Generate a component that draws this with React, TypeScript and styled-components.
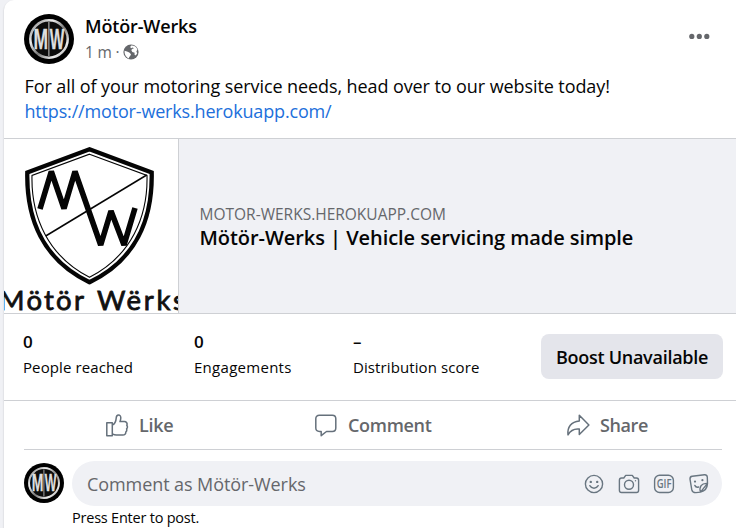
import React from "react";
import styled, { createGlobalStyle } from "styled-components";

const GlobalStyle = createGlobalStyle`
  * { box-sizing: border-box; }
  html, body { margin: 0; padding: 0; background: #f0f1f5; overflow: hidden; }
  body { font-family: "Open Sans", "Noto Sans", sans-serif; color: #050505; }
`;

const Page = styled.div`
  height: 528px;
  padding-left: 4px;
  overflow: hidden;
`;

const Card = styled.article`
  height: 540px;
  background: #fff;
  border-top-left-radius: 10px;
  box-shadow: 0 1px 2px rgba(0, 0, 0, 0.2);
`;

const Header = styled.header`
  display: flex;
  height: 74px;
  padding: 14px 26px 0 20px;
`;

const Byline = styled.div`
  flex: 1;
  margin-top: -1px;
  padding-left: 11px;
`;

const Label = styled.div<{ $size: number; $line: number; $track?: number; $weight?: number; $color?: string }>`
  font-size: ${(p) => p.$size}px;
  line-height: ${(p) => p.$line}px;
  letter-spacing: ${(p) => p.$track ?? 0}px;
  font-weight: ${(p) => p.$weight ?? 400};
  color: ${(p) => p.$color ?? "#050505"};
  white-space: nowrap;
`;

const Meta = styled.div`
  display: flex;
  align-items: center;
  gap: 4px;
  height: 26px;
`;

const MoreButton = styled.button`
  display: flex;
  align-self: flex-start;
  margin: 18px 0 0;
  padding: 0;
  border: 0;
  background: none;
`;

const Message = styled.div`
  height: 64px;
  padding-left: 20.5px;
`;

const Preview = styled.section`
  display: flex;
  height: 176px;
  border-top: 1px solid #ced0d4;
  border-bottom: 1px solid #ced0d4;
  background: #f0f1f5;
`;

const Thumb = styled.div`
  width: 175px;
  border-right: 1px solid #ced0d4;
  background: #fff;
`;

const PreviewText = styled.div`
  padding: 64px 0 0 20.5px;
`;

const Stats = styled.section`
  display: grid;
  grid-template-columns: 171px 159px 1fr 182px;
  height: 86px;
  padding: 15px 13px 0 19px;
`;

const BoostButton = styled.button`
  height: 45px;
  margin-top: 5px;
  padding: 0;
  border: 0;
  border-radius: 8px;
  background: #e4e5eb;
  font-family: inherit;
`;

const Actions = styled.div`
  display: grid;
  grid-template-columns: 209px 252px 1fr;
  height: 49px;
  margin: 0 14px 0 20px;
  padding-left: 81px;
  border-bottom: 1px solid #ced0d4;
`;

const ActionBar = styled.div`
  border-top: 1px solid #ced0d4;
`;

const Action = styled.div`
  display: flex;
  align-items: center;
  gap: 10px;
  padding-bottom: 1px;
`;

const Composer = styled.div`
  display: flex;
  padding: 11px 14px 0 20px;
`;

const ComposerAvatar = styled.div`
  padding-top: 2px;
  width: 48px;
`;

const Field = styled.div`
  display: flex;
  align-items: center;
  justify-content: space-between;
  width: 650px;
  height: 45px;
  padding: 0 12px 0 15px;
  border-radius: 23px;
  background: #f0f1f5;
`;

const Tools = styled.div`
  display: flex;
  gap: 13px;
`;

const Hint = styled.div`
  padding-left: 68px;
`;

const Drawing = styled.svg`
  display: block;
  flex: none;
  overflow: hidden;
`;

function Avatar({ size }: { size: number }) {
  return (
    <Drawing width={size} height={size} viewBox="0 0 50 50">
      <defs>
        <linearGradient id="chrome" x1="0" y1="0" x2="1" y2="1">
          <stop offset="0" stopColor="#777" />
          <stop offset="0.3" stopColor="#eee" />
          <stop offset="0.55" stopColor="#777" />
          <stop offset="0.8" stopColor="#eee" />
          <stop offset="1" stopColor="#888" />
        </linearGradient>
      </defs>
      <circle cx="25" cy="25" r="25" fill="#000" />
      <circle cx="25" cy="25" r="18.7" fill="#0c0c0c" stroke="url(#chrome)" strokeWidth="2.5" />
      <path d="M24.9 8v34" stroke="#ccc" strokeWidth="1" />
      <g fill="#dedede" stroke="#dedede" strokeWidth="0.4" fontFamily="Liberation Sans" fontWeight="700" fontSize="30">
        <text x="9.6" y="35.4" textLength="14.6" lengthAdjust="spacingAndGlyphs">M</text>
        <text x="25.8" y="35.4" textLength="14.6" lengthAdjust="spacingAndGlyphs">W</text>
      </g>
    </Drawing>
  );
}

function ShieldLogo() {
  return (
    <Drawing width="174" height="174" viewBox="0 0 174 174">
      <defs>
        <clipPath id="monogram"><rect x="30" y="31" width="110" height="76.5" /></clipPath>
      </defs>
      <g fill="none" stroke="#050505">
        <path d="M85.5 10.3L147.7 33.6C148.6 80 132 121 85.5 143.2C39 121 22.4 80 23.3 33.6Z" strokeWidth="4.3" />
        <path d="M85.5 15.2L143 36.5C144 78 127 117 85.5 138.3C44 117 27 78 28 36.5Z" strokeWidth="1.1" />
        <path d="M41.7 97L142.7 36" strokeWidth="1.5" />
        <path clipPath="url(#monogram)" strokeWidth="5.6" strokeLinejoin="bevel"
          d="M36 70L47.3 32.5L60 69.5L71 32.5L96.7 106L107 72L120 106L131 69" />
      </g>
      <g fontFamily="Lato" fontWeight="400" fontSize="27.5" fill="#111" stroke="#111" strokeWidth="0.8">
        <text x="-5" y="170.6" textLength="85" lengthAdjust="spacing">Mötör</text>
        <text x="93" y="170.6" textLength="88" lengthAdjust="spacing">Wërks</text>
      </g>
    </Drawing>
  );
}

const Globe = () => (
  <Drawing width="16" height="16" viewBox="0 0 16 16">
    <circle cx="8" cy="8" r="7.6" fill="#65676b" />
    <path fill="#fff" d="M8.2 1.6C10.8 1.3 13.5 3 14.4 5.4L13.4 7.4L14.2 9.2L12.8 11.6L11.4 10.6L11.7 8.7L9.3 7.9L8.3 6.1L9.6 4.8L11 4.3L9.5 3.6L8.1 4.2L7.2 3ZM1.6 6.8L4 7.6L6.3 8.6L8 10.3L7.2 12L6.2 13L5.8 14.5C3.2 13.4 1.2 10.4 1.6 6.8Z" />
  </Drawing>
);

const Dots = () => (
  <Drawing width="22" height="8" viewBox="0 0 22 8" fill="#65676b">
    <circle cx="3.8" cy="4.4" r="2.6" /><circle cx="11.3" cy="4.4" r="2.6" /><circle cx="18.8" cy="4.4" r="2.6" />
  </Drawing>
);

const LikeIcon = () => (
  <Drawing width="24" height="24" viewBox="0 0 24 24" fill="none" stroke="#65707b" strokeWidth="1.5" strokeLinejoin="round">
    <path d="M1.8 9.8H7.3V22.7H1.8ZM7.3 12.2C9.8 10.8 11 8.2 11.2 5.1C11.3 1 15.8.9 15.8 4.8C15.8 6.5 15.3 7.7 15 8.6H19.3C21.4 8.6 22.7 10.5 21.8 12.2C22.6 13.3 22.5 14.8 21.6 15.8C22 17.1 21.6 18.3 20.8 19C20.9 21 19.7 22 17.8 22H11.4C9.6 22 8.4 21.4 7.3 20.8" />
  </Drawing>
);

const CommentIcon = () => (
  <Drawing width="24" height="24" viewBox="0 0 24 24" fill="none" stroke="#65707b" strokeWidth="1.5" strokeLinejoin="round">
    <path d="M5.4 2.3H18.3C20.7 2.3 21.8 3.7 21.8 5.8V15C21.8 17.2 20.6 18.5 18.3 18.5H12.5L7.2 22.7V18.5H5.5C3 18.5 1.8 17.2 1.8 15V5.8C1.8 3.6 3 2.3 5.4 2.3Z" />
  </Drawing>
);

const ShareIcon = () => (
  <Drawing width="24" height="24" viewBox="0 0 24 24" fill="none" stroke="#65707b" strokeWidth="1.5" strokeLinejoin="round">
    <path d="M13.3 2.3L22.9 12L13.3 21.5V16.1C8.4 15.5 4.3 17.8 2 21.9C1.1 14.1 5.2 8.5 13.3 7.9Z" />
  </Drawing>
);

const toolProps = { width: 22, height: 22, viewBox: "0 0 22 22", fill: "none", stroke: "#697681", strokeWidth: 1.4, strokeLinejoin: "round" as const };

const SmileIcon = () => (
  <Drawing {...toolProps}>
    <circle cx="11" cy="11" r="8.6" />
    <path d="M6.8 12.7C8.6 16 13.4 16 15.2 12.7" strokeLinecap="round" />
    <g fill="#697681" stroke="none"><circle cx="7.8" cy="8.9" r="1.2" /><circle cx="14.2" cy="8.9" r="1.2" /></g>
  </Drawing>
);

const CameraIcon = () => (
  <Drawing {...toolProps}>
    <path d="M3.5 5H5.8L7.7 2.4H14.3L16.2 5H18.5Q20.6 5 20.6 7.2V17.3Q20.6 19.5 18.5 19.5H3.5Q1.4 19.5 1.4 17.3V7.2Q1.4 5 3.5 5Z" />
    <circle cx="11" cy="11.8" r="4.5" /><circle cx="17.5" cy="7.8" r=".7" fill="#697681" stroke="none" />
  </Drawing>
);

const GifIcon = () => (
  <Drawing {...toolProps}>
    <rect x="1.6" y="2.3" width="18.8" height="17.2" rx="5" />
    <text x="3.7" y="15.2" textLength="14.8" lengthAdjust="spacingAndGlyphs" fontFamily="Open Sans" fontSize="12" fontWeight="600" fill="#697681" stroke="none">GIF</text>
  </Drawing>
);

const StickerIcon = () => (
  <Drawing {...toolProps}>
    <path d="M4.2 3.3L16.5 1.8Q18.9 1.6 19.3 4L19.5 10.4L12.5 19.1L8 19.6Q4.5 19.7 3.8 16.8L2 6.2Q1.8 3.6 4.2 3.3ZM12.5 19.1C10.9 14.2 13.3 9.8 19.5 10.4M12.5 19.1C17 18 19.3 15 19.5 10.4" />
    <path d="M6.8 12.4Q8 14.8 10.6 14" strokeLinecap="round" />
    <g fill="#697681" stroke="none"><circle cx="7" cy="8.6" r="1.1" /><circle cx="14.4" cy="7.2" r="1.1" /></g>
  </Drawing>
);

export default function App() {
  return (
    <>
      <GlobalStyle />
      <Page>
        <Card>
          <Header>
            <Avatar size={50} />
            <Byline>
              <Label $size={18} $line={26} $track={-0.15} $weight={600}>Mötör-Werks</Label>
              <Meta>
                <Label $size={15.5} $line={26} $track={-0.2} $color="#65676b">1 m ·</Label>
                <Globe />
              </Meta>
            </Byline>
            <MoreButton aria-label="More"><Dots /></MoreButton>
          </Header>
          <Message>
            <Label $size={18} $line={25} $track={-0.09}>For all of your motoring service needs, head over to our website today!</Label>
            <Label $size={18} $line={25} $track={-0.17} $color="#216fdb">https://motor-werks.herokuapp.com/</Label>
          </Message>
          <Preview>
            <Thumb><ShieldLogo /></Thumb>
            <PreviewText>
              <Label $size={15.5} $line={22} $color="#65676b">MOTOR-WERKS.HEROKUAPP.COM</Label>
              <Label $size={20} $line={26} $track={-0.06} $weight={600}>Mötör-Werks | Vehicle servicing made simple</Label>
            </PreviewText>
          </Preview>
          <Stats>
            <div><Label $size={17} $line={26} $weight={600}>0</Label><Label $size={15} $line={25} $track={0.1}>People reached</Label></div>
            <div><Label $size={17} $line={26} $weight={600}>0</Label><Label $size={15} $line={25} $track={0.28}>Engagements</Label></div>
            <div><Label $size={17} $line={26} $weight={600}>–</Label><Label $size={15} $line={25} $track={0.1}>Distribution score</Label></div>
            <BoostButton><Label $size={18} $line={26} $track={-0.27} $weight={600}>Boost Unavailable</Label></BoostButton>
          </Stats>
          <ActionBar>
            <Actions>
              <Action><LikeIcon /><Label $size={18} $line={26} $track={-0.3} $weight={600} $color="#65676b">Like</Label></Action>
              <Action><CommentIcon /><Label $size={18} $line={26} $track={-0.3} $weight={600} $color="#65676b">Comment</Label></Action>
              <Action><ShareIcon /><Label $size={18} $line={26} $track={-0.4} $weight={600} $color="#65676b">Share</Label></Action>
            </Actions>
          </ActionBar>
          <Composer>
            <ComposerAvatar><Avatar size={40} /></ComposerAvatar>
            <Field>
              <Label $size={18} $line={26} $track={-0.08} $color="#65676b">Comment as Mötör-Werks</Label>
              <Tools><SmileIcon /><CameraIcon /><GifIcon /><StickerIcon /></Tools>
            </Field>
          </Composer>
          <Hint><Label $size={14.5} $line={23} $track={-0.22}>Press Enter to post.</Label></Hint>
        </Card>
      </Page>
    </>
  );
}
